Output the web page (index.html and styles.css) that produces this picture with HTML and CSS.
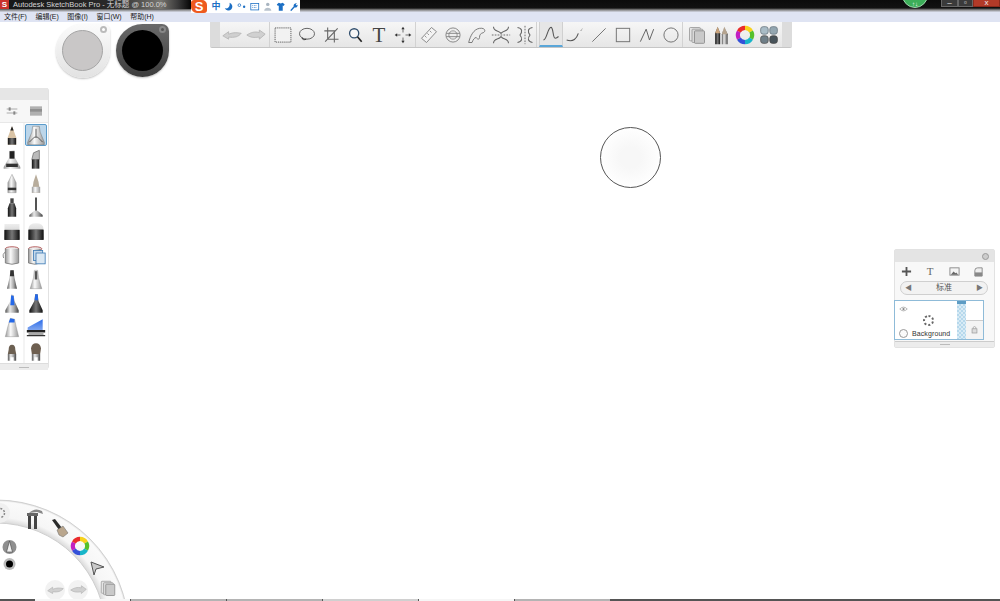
FILE: index.html
```html
<!DOCTYPE html>
<html lang="zh">
<head>
<meta charset="utf-8">
<title>Autodesk SketchBook Pro</title>
<link rel="stylesheet" href="styles.css">
</head>
<body>
<svg class="defs" width="0" height="0" aria-hidden="true">
  <defs>
    <linearGradient id="metal" x1="0" x2="1" y1="0" y2="0"><stop offset="0" stop-color="#555"/><stop offset=".35" stop-color="#e8e8e8"/><stop offset=".65" stop-color="#aaa"/><stop offset="1" stop-color="#444"/></linearGradient>
    <linearGradient id="light" x1="0" x2="1" y1="0" y2="0"><stop offset="0" stop-color="#999"/><stop offset=".4" stop-color="#fafafa"/><stop offset="1" stop-color="#999"/></linearGradient>
    <linearGradient id="dark" x1="0" x2="1" y1="0" y2="0"><stop offset="0" stop-color="#111"/><stop offset=".5" stop-color="#777"/><stop offset="1" stop-color="#111"/></linearGradient>
    <linearGradient id="block" x1="0" x2="0" y1="0" y2="1"><stop offset="0" stop-color="#eee"/><stop offset=".35" stop-color="#ddd"/><stop offset=".4" stop-color="#666"/><stop offset="1" stop-color="#222"/></linearGradient>
    <linearGradient id="tipblue" x1="0" x2="0" y1="0" y2="1"><stop offset="0" stop-color="#2a6bea"/><stop offset="1" stop-color="#7fa5ee"/></linearGradient>
    <symbol id="arrow-l" viewBox="0 0 24 14"><path d="M1 8 8 3v3c6-2.500 10-2 15-1-3 4-8 5.500-15 4.500V12z" fill="#d0d0d0" stroke="#b5b5b5"/></symbol>
    <symbol id="arrow-r" viewBox="0 0 24 14"><path d="M23 6 16 1v3C10 2.500 6 4 1 7c4 3 8 3.500 15 2.500V12z" fill="#d0d0d0" stroke="#b5b5b5"/></symbol>
    <symbol id="wheel" viewBox="0 0 24 24"><g fill="none" stroke-width="5"><path d="M12 3.500a8.500 8.500 0 0 1 7.400 4.300" stroke="#f7d21c"/><path d="M19.400 7.800a8.500 8.500 0 0 1 0 8.500" stroke="#56c02b"/><path d="M19.400 16.300A8.500 8.500 0 0 1 12 20.500" stroke="#17b5c9"/><path d="M12 20.500a8.500 8.500 0 0 1-7.400-4.200" stroke="#3450d8"/><path d="M4.600 16.300a8.500 8.500 0 0 1 0-8.500" stroke="#c21fc2"/><path d="M4.600 7.800A8.500 8.500 0 0 1 12 3.500" stroke="#ea2b2b"/></g></symbol>
    <symbol id="layers" viewBox="0 0 24 24"><rect x="3" y="3" width="13" height="16" rx="1" fill="#e4e4e4" stroke="#999"/><rect x="6" y="5" width="13" height="16" rx="1" fill="#d8d8d8" stroke="#999"/><rect x="9" y="7" width="12" height="15" rx="1" fill="#c9c9c9" stroke="#888"/></symbol>
  </defs>
</svg>

<header class="titlebar">
  <div class="app-title">
    <span class="app-logo">S</span>
    <span class="app-name">Autodesk SketchBook Pro - 无标题 @ 100.0%</span>
  </div>
  <div class="ime">
    <span class="ime-logo">S</span>
    <span class="ime-cn">中</span>
    <svg class="ime-icon" viewBox="0 0 12 12"><path d="M7 1a5 5 0 1 1-6 7c4 1 7-2 6-7z" fill="#1c6fc4"/></svg>
    <svg class="ime-icon" viewBox="0 0 12 12"><circle cx="3" cy="4" r="1.700" fill="none" stroke="#1c6fc4"/><circle cx="9" cy="6" r="1.500" fill="#1c6fc4"/></svg>
    <svg class="ime-icon" viewBox="0 0 12 12"><rect x="1" y="2" width="10" height="8" fill="none" stroke="#1c6fc4"/><path d="M3 4.500h6M3 7h6" stroke="#1c6fc4" stroke-dasharray="1 1"/></svg>
    <svg class="ime-icon" viewBox="0 0 12 12"><circle cx="6" cy="3" r="2.200" fill="#a8b4c0"/><path d="M1.500 11c0-5 9-5 9 0z" fill="#b8c2cc"/></svg>
    <svg class="ime-icon" viewBox="0 0 12 12"><path d="M3.500 1 1 3l1.500 2 1-.5V11h5V4.500l1 .5L11 3 8.500 1 6 2z" fill="#1c6fc4"/></svg>
    <svg class="ime-icon" viewBox="0 0 12 12"><path d="M1.500 10.500 6 5.500C5 3 7.500 1 10 1.500L8.500 3.300 10 4.500 11 3c.3 3-2 4.500-4 3.800l-4 4.500z" fill="#1c6fc4"/></svg>
  </div>
  <div class="update-badge">↑↓</div>
  <div class="win-buttons">
    <span class="win-btn min">–</span>
    <span class="win-btn max">▫</span>
    <span class="win-btn close">x</span>
  </div>
</header>

<nav class="menubar">
  <span class="menu-item">文件(F)</span>
  <span class="menu-item">编辑(E)</span>
  <span class="menu-item">图像(I)</span>
  <span class="menu-item">窗口(W)</span>
  <span class="menu-item">帮助(H)</span>
</nav>

<main class="canvas">
  <div class="puck puck-light"><span class="puck-core"></span><span class="puck-ring"></span></div>
  <div class="puck puck-dark"><span class="puck-core"></span><span class="puck-ring"></span></div>

  <div class="toolbar">
    <div class="grip"></div>
    <div class="tool-group g-edit">
      <svg class="tool" viewBox="0 0 24 24"><use href="#arrow-l" y="5" width="24" height="14"/></svg>
      <svg class="tool" viewBox="0 0 24 24"><use href="#arrow-r" y="5" width="24" height="14"/></svg>
    </div>
    <div class="tool-group g-select">
      <svg class="tool" viewBox="0 0 24 24"><rect x="2.500" y="3.500" width="19" height="17" fill="#f2f2f2" stroke="#444" stroke-dasharray="1.500 1"/></svg>
      <svg class="tool" viewBox="0 0 24 24"><ellipse cx="12" cy="10.500" rx="9" ry="6.500" fill="none" stroke="#666" stroke-width="1.200"/><path d="M6 15c0 3 3 3 5 2" fill="none" stroke="#333" stroke-width="1.200"/></svg>
      <svg class="tool" viewBox="0 0 24 24"><path d="M8 3v14h13M4 7h12v14M5 20 20 4" fill="none" stroke="#666" stroke-width="1.300"/></svg>
      <svg class="tool" viewBox="0 0 24 24"><circle cx="11" cy="10" r="5.500" fill="#f6f6f6" stroke="#33506e" stroke-width="1.600"/><path d="m15 14 5 6" stroke="#222" stroke-width="2"/></svg>
      <span class="tool t-glyph">T</span>
      <svg class="tool" viewBox="0 0 24 24"><path d="M12 4v5M12 15v5M4 12h5M15 12h5" stroke="#555"/><path d="m12 2 2 3h-4zM12 22l2-3h-4zM2 12l3-2v4zM22 12l-3-2v4z" fill="#333"/></svg>
    </div>
    <div class="tool-group g-guides">
      <svg class="tool" viewBox="0 0 24 24"><path d="m3 16 12-13 6 5-12 13z" fill="#f4f4f4" stroke="#777"/><path d="m7 13 2 2m1-5 2 2m1-5 2 2" stroke="#888"/></svg>
      <svg class="tool" viewBox="0 0 24 24"><circle cx="12" cy="12" r="8.500" fill="#eee" stroke="#777"/><ellipse cx="12" cy="12" rx="5" ry="5" fill="none" stroke="#888"/><path d="M4 10h16M4 14h16" stroke="#777"/></svg>
      <svg class="tool" viewBox="0 0 24 24"><path d="M2 21c2-8 6-16 13-17 6-1 8 3 5 5-4 1-5 3-5 6 0 3-3 2-4 0-2 0-4 3-5 6z" fill="#eee" stroke="#666"/></svg>
      <svg class="tool" viewBox="0 0 24 24"><path d="M1 12h22" stroke="#555" stroke-dasharray="2 1.500"/><path d="M3 2c0 6 6 4 9 8 3-4 9-2 9-8M3 22c0-6 6-4 9-8 3 4 9 2 9 8" fill="none" stroke="#666" stroke-width="1.300"/></svg>
      <svg class="tool" viewBox="0 0 24 24"><path d="M12 1v22" stroke="#555" stroke-dasharray="2 1.500"/><path d="M3 3c6 1 6 5 3 9 3 4 3 8-3 9M21 3c-6 1-6 5-3 9-3 4-3 8 3 9" fill="none" stroke="#666" stroke-width="1.300"/></svg>
    </div>
    <div class="tool-group g-draw">
      <span class="tool-on"><svg class="tool" viewBox="0 0 24 24"><path d="M3 19C7 19 8 4 12 4c3 0 2 13 5 13 2 0 3-1 4-2" fill="none" stroke="#555" stroke-width="1.300"/></svg></span>
      <svg class="tool" viewBox="0 0 24 24"><path d="M2 18c8 3 12-2 14-8" fill="none" stroke="#555" stroke-width="1.300"/><path d="M19 7l2-3" stroke="#555" stroke-dasharray="1 1"/></svg>
      <svg class="tool" viewBox="0 0 24 24"><path d="M4 20 20 4" stroke="#777" stroke-width="1.200"/></svg>
      <svg class="tool" viewBox="0 0 24 24"><rect x="4" y="4" width="16" height="16" fill="none" stroke="#777" stroke-width="1.200"/></svg>
      <svg class="tool" viewBox="0 0 24 24"><path d="M4 20 11 5l4 13 5-13" fill="none" stroke="#666" stroke-width="1.200"/></svg>
      <svg class="tool" viewBox="0 0 24 24"><circle cx="12" cy="12" r="8.500" fill="none" stroke="#777" stroke-width="1.200"/></svg>
    </div>
    <div class="tool-group g-end">
      <svg class="tool" viewBox="0 0 24 24"><use href="#layers"/></svg>
      <svg class="tool" viewBox="0 0 24 24"><path d="M5 10 8 2l3 8v13H5z" fill="url(#dark)"/><path d="M5 10h6l-3-8z" fill="#c9a27a"/><path d="m13 11 3-9 4 9v12h-7z" fill="url(#metal)"/><path d="m13 11 3-9 4 9z" fill="#b5a48f"/></svg>
      <svg class="tool" viewBox="0 0 24 24"><use href="#wheel"/></svg>
      <svg class="tool" viewBox="0 0 24 24"><rect x="2" y="2" width="9" height="9" rx="3" fill="#a9bcc6" stroke="#6c7a82"/><rect x="13" y="2" width="9" height="9" rx="3" fill="#93a6b0" stroke="#6c7a82"/><rect x="2" y="13" width="9" height="9" rx="3" fill="#6f7f88" stroke="#555"/><rect x="13" y="13" width="9" height="9" rx="3" fill="#47535a" stroke="#444"/></svg>
    </div>
    <div class="grip"></div>
  </div>

  <aside class="brush-palette">
    <div class="pal-head"></div>
    <div class="pal-tools">
      <svg class="pal-icon" viewBox="0 0 24 24"><path d="M4 9h16M4 15h16" stroke="#888"/><rect x="7" y="6.500" width="3" height="5" fill="#888"/><rect x="14" y="12.500" width="3" height="5" fill="#888"/></svg>
      <svg class="pal-icon" viewBox="0 0 24 24"><rect x="3" y="5" width="18" height="14" fill="#b0b0b0"/><rect x="3" y="9" width="18" height="4" fill="#8f8f8f"/></svg>
    </div>
    <div class="brush-grid">
      <svg class="brush" viewBox="0 0 24 24"><path d="m12 1 5 13v9H7v-9z" fill="#d9c3a5"/><path d="m12 1 2 5h-4z" fill="#222"/><rect x="7" y="15" width="10" height="8" fill="url(#dark)"/></svg>
      <span class="brush-on"><svg class="brush" viewBox="0 0 24 24"><path d="M8 1h8l1 7 5 12v3H2v-3l5-12z" fill="url(#light)" stroke="#666" stroke-width=".5"/><path d="M12 4v10M4 20l6-6h4l6 6" fill="none" stroke="#444"/></svg></span>
      <svg class="brush" viewBox="0 0 24 24"><path d="M9 1h6v8l7 12v2H2v-2L9 9z" fill="url(#light)"/><rect x="9" y="2" width="6" height="9" fill="#222"/><rect x="5" y="17" width="14" height="4" fill="#333"/></svg>
      <svg class="brush" viewBox="0 0 24 24"><path d="M7 12 9 4l7-3v11z" fill="#bbb" stroke="#777"/><rect x="7" y="12" width="9" height="11" fill="url(#dark)"/></svg>
      <svg class="brush" viewBox="0 0 24 24"><path d="m12 1 5 10v12H7V11z" fill="url(#light)" stroke="#888" stroke-width=".5"/><rect x="7" y="17" width="10" height="3" fill="#333"/></svg>
      <svg class="brush" viewBox="0 0 24 24"><path d="m12 1 3 9 2 13H7l2-13z" fill="#b8ad9c"/><rect x="7" y="16" width="10" height="7" fill="url(#light)"/></svg>
      <svg class="brush" viewBox="0 0 24 24"><rect x="10" y="1" width="4" height="6" fill="#444"/><path d="m9 7h6l2 6v10H7V13z" fill="url(#dark)"/></svg>
      <svg class="brush" viewBox="0 0 24 24"><rect x="11" y="0" width="2" height="16" fill="#333"/><path d="M10 16h4l6 5v2H4v-2z" fill="url(#metal)"/></svg>
      <svg class="brush" viewBox="0 0 24 24"><rect x="3" y="3" width="18" height="19" fill="url(#block)"/><rect x="3" y="10" width="18" height="12" fill="url(#dark)"/></svg>
      <svg class="brush" viewBox="0 0 24 24"><path d="M3 9q0-7 9-7t9 7v13H3z" fill="url(#block)"/><rect x="3" y="10" width="18" height="12" fill="url(#dark)"/></svg>
      <svg class="brush" viewBox="0 0 24 24"><ellipse cx="12" cy="4" rx="8" ry="2.500" fill="#eee" stroke="#a44"/><path d="M4 4v17q8 3 16 0V4" fill="url(#light)" stroke="#777"/><path d="M4 8q-4 2-2 7" fill="none" stroke="#777"/></svg>
      <svg class="brush" viewBox="0 0 24 24"><ellipse cx="11" cy="4" rx="8" ry="2.500" fill="#eee" stroke="#a44"/><path d="M3 4v17q8 3 14 0V4" fill="url(#light)" stroke="#777"/><rect x="9" y="6" width="11" height="12" fill="#c4d8ea" stroke="#3f7cb5"/><rect x="12" y="9" width="11" height="13" fill="#dbe8f3" stroke="#3f7cb5"/></svg>
      <svg class="brush" viewBox="0 0 24 24"><path d="M10 1h4l1 9 3 13H6l3-13z" fill="url(#metal)"/><path d="M10 1h4l.500 7h-5z" fill="#333"/></svg>
      <svg class="brush" viewBox="0 0 24 24"><path d="M10 1h4l1 9 4 13H5l4-13z" fill="url(#light)" stroke="#888" stroke-width=".5"/><path d="M10.500 2h3v10h-3z" fill="#555"/></svg>
      <svg class="brush" viewBox="0 0 24 24"><path d="m10 9 1-8 3 1 1 7 5 11v3H4v-3z" fill="url(#metal)"/><path d="m10 14 1-12 3 1 1 11z" fill="#2468e8"/></svg>
      <svg class="brush" viewBox="0 0 24 24"><path d="m10 9 1-8h3l1 8 5 11v3H4v-3z" fill="url(#dark)"/><path d="m10.500 8 .500-7h3l.500 7z" fill="#2468e8"/></svg>
      <svg class="brush" viewBox="0 0 24 24"><path d="M10 1l5 1 2 9 3 12H4l3-12z" fill="url(#light)" stroke="#888" stroke-width=".5"/><path d="m8 6 2-5 5 1v4z" fill="#2468e8"/></svg>
      <svg class="brush" viewBox="0 0 24 24"><path d="m2 12 18-10v13H2z" fill="url(#tipblue)"/><rect x="1" y="15" width="22" height="3" fill="#222"/><rect x="3" y="18" width="18" height="3" fill="#aaa"/><rect x="1" y="21" width="22" height="1.500" fill="#333"/></svg>
      <svg class="brush" viewBox="0 0 24 24"><path d="M8 10q0-6 4-6t4 6l1 5H7z" fill="#6c6052"/><path d="M7 15h10v8h-3v-4h-4v4H7z" fill="url(#metal)"/></svg>
      <svg class="brush" viewBox="0 0 24 24"><path d="M6 8q1-6 6-6t6 6l-1 7H7z" fill="#6e5f50"/><path d="M7 15h10v8h-3v-4h-4v4H7z" fill="url(#metal)"/></svg>
    </div>
    <div class="pal-foot"><span class="foot-mark"></span></div>
  </aside>

  <div class="cursor-ring"></div>

  <aside class="layer-panel">
    <div class="lp-head"><span class="lp-close"></span></div>
    <div class="lp-tools">
      <svg class="lp-icon" viewBox="0 0 12 12"><path d="M5 1h2v4h4v2H7v4H5V7H1V5h4z" fill="#555"/></svg>
      <span class="lp-icon lp-t">T</span>
      <svg class="lp-icon" viewBox="0 0 12 12"><rect x="1" y="2" width="10" height="8" fill="#f4f4f4" stroke="#888"/><path d="M2 9.500 5 6l2 2 1-1 2 2.500z" fill="#666"/></svg>
      <svg class="lp-icon" viewBox="0 0 12 12"><path d="M2 11V5q0-3 3-3h5v9z" fill="#eee" stroke="#888"/><rect x="2" y="7" width="8" height="4" fill="#888"/></svg>
    </div>
    <div class="lp-mode">
      <span class="lp-arrow">◀</span>
      <span class="lp-name">标准</span>
      <span class="lp-arrow">▶</span>
    </div>
    <div class="layer-row">
      <div class="layer-thumb">
        <svg class="layer-eye" viewBox="0 0 12 8"><path d="M1 4q5-5 10 0-5 5-10 0z" fill="#fff" stroke="#888" stroke-width=".8"/><circle cx="6" cy="4" r="1.500" fill="#888"/></svg>
        <span class="layer-busy"></span>
        <div class="layer-label"><span class="layer-radio"></span><span class="layer-name">Background</span></div>
      </div>
      <div class="layer-slider"></div>
      <div class="layer-side">
        <div class="layer-blank"></div>
        <div class="layer-lock"><svg class="lock-icon" viewBox="0 0 10 12"><path d="M3 5V3q2-2.500 4 0v2" fill="none" stroke="#999"/><rect x="1.500" y="5" width="7" height="6" fill="#ddd" stroke="#999"/></svg></div>
      </div>
    </div>
    <div class="lp-foot"><span class="foot-mark"></span></div>
  </aside>

  <svg class="radial" viewBox="0 0 135 106">
    <defs>
      <radialGradient id="band" gradientUnits="userSpaceOnUse" cx="-4" cy="138" r="133">
        <stop offset=".83" stop-color="#dcdcdc"/><stop offset=".87" stop-color="#f6f6f6"/><stop offset=".985" stop-color="#fafafa"/><stop offset="1" stop-color="#e0e0e0"/>
      </radialGradient>
    </defs>
    <circle cx="-4" cy="138" r="133" fill="url(#band)" stroke="#d0d0d0"/>
    <circle cx="-4" cy="138" r="110" fill="#fff" stroke="#cfcfcf"/>
    <circle cx="0" cy="18" r="10" fill="#f0f0f0"/>
    <circle cx="0" cy="18" r="4.500" fill="none" stroke="#888" stroke-width="1.500" stroke-dasharray="2 1.500"/>
    <path d="M28 21h3v13h-3zM34 21h3v13h-3z" fill="#444"/>
    <path d="M27 18h11v3H27z" fill="#666"/>
    <path d="M29 18q6-6 13-2l1 3-6-2z" fill="#888"/>
    <path d="m52 25 3-1 7 9-3 2z" fill="#2c2c2c"/>
    <path d="m57 35 6-4 5 7-5 4-4-2z" fill="#b9a68d" stroke="#666" stroke-width=".5"/>
    <svg x="70" y="41" width="20" height="20" viewBox="0 0 24 24"><use href="#wheel"/></svg>
    <path d="m91 67 13 5-8 2-2 6z" fill="#c9c9c9" stroke="#555"/>
    <svg x="99" y="84" width="18" height="18" viewBox="0 0 24 24"><use href="#layers"/></svg>
    <circle cx="55" cy="95" r="10" fill="#f2f2f2"/>
    <circle cx="78" cy="95" r="10" fill="#f2f2f2"/>
    <svg x="47" y="90" width="17" height="10" viewBox="0 0 24 14"><use href="#arrow-l"/></svg>
    <svg x="70" y="90" width="17" height="10" viewBox="0 0 24 14"><use href="#arrow-r"/></svg>
    <circle cx="9.500" cy="52" r="7" fill="#8f8f8f"/>
    <path d="m9.500 46 3 11h-6z" fill="#f0f0f0" stroke="#444" stroke-width=".6"/>
    <circle cx="9.500" cy="69" r="6" fill="#bbb"/>
    <circle cx="9.500" cy="69" r="3.500" fill="#000"/>
  </svg>
</main>

<footer class="taskbar">
  <span class="task-start"></span>
  <span class="task task-active"></span>
  <span class="task"></span>
  <span class="task"></span>
  <span class="task task-mid"></span>
  <span class="task task-active"></span>
  <span class="task"></span>
</footer>
</body>
</html>
```

FILE: styles.css
```css
* { box-sizing: border-box; }
html, body { margin: 0; padding: 0; }
body {
  width: 1000px;
  height: 601px;
  overflow: hidden;
  display: flex;
  flex-direction: column;
  background: #fff;
  font-family: "Liberation Sans", "Noto Sans CJK SC", sans-serif;
}
.defs { position: absolute; }

.titlebar {
  height: 12px;
  flex: none;
  display: flex;
  position: relative;
  background: linear-gradient(#0b0b0b 0, #111 8px, #8a8a8a 10px, #d5d9e6 12px);
}
.app-title {
  width: 191px;
  height: 9px;
  flex: none;
  display: flex;
  align-items: center;
  background: linear-gradient(90deg, #161616 0, #2a2a2a 60%, #77756f 84%, #3a3a3a 93%, #050505 100%);
}
.app-logo {
  width: 9px;
  height: 9px;
  margin-right: 4px;
  flex: none;
  background: #c9302a;
  color: #fff;
  font: bold 8px/9px "Liberation Sans", sans-serif;
  text-align: center;
}
.app-name {
  font-size: 7.500px;
  line-height: 9px;
  color: #d4d4d4;
  white-space: nowrap;
}
.ime {
  width: 109px;
  height: 12.500px;
  flex: none;
  display: flex;
  align-items: center;
  gap: 3.500px;
  background: #fff;
}
.ime-logo {
  width: 16px;
  height: 13px;
  flex: none;
  margin-right: 1px;
  background: #ee5a1e;
  border-radius: 3px 5px 3px 6px;
  color: #fff;
  font: bold 13px/13px "Liberation Sans", sans-serif;
  text-align: center;
}
.ime-cn {
  width: 9px;
  flex: none;
  font-size: 9px;
  line-height: 12px;
  font-weight: bold;
  color: #1c6fc4;
}
.ime-icon { width: 9.500px; height: 9.500px; flex: none; }
.update-badge {
  position: absolute;
  left: 902px;
  top: -18px;
  width: 26px;
  height: 26px;
  border-radius: 50%;
  background: #3cae59;
  border: 1px solid #9fd8ae;
  color: #fff;
  font-size: 6px;
  line-height: 42px;
  text-align: center;
}
.win-buttons {
  position: absolute;
  right: 0;
  top: 0;
  display: flex;
  height: 7px;
}
.win-btn {
  height: 7px;
  font-size: 8px;
  line-height: 6px;
  text-align: center;
  color: #eee;
  border: 1px solid #666;
  border-top: 0;
}
.min { width: 17px; background: #3a3a3a; }
.max { width: 15px; background: #3a3a3a; }
.close { width: 27px; background: #b23a28; border-color: #8a2a1c; }

.menubar {
  height: 10px;
  flex: none;
  display: flex;
  align-items: center;
  gap: 8.500px;
  padding-left: 4px;
  background: #dfe4f3;
}
.menu-item {
  font-size: 7px;
  line-height: 10px;
  color: #222;
  white-space: nowrap;
}

.canvas {
  flex: 1;
  position: relative;
  background: #fff;
  overflow: hidden;
}

.puck {
  position: absolute;
  top: 2px;
  width: 54px;
  height: 54px;
  border-radius: 50% 7px 50% 50%;
  box-shadow: 0 1px 2px rgba(0,0,0,.25);
}
.puck-light { left: 56px; background: linear-gradient(#fbfbfb, #e2e2e2); }
.puck-dark { left: 116px; width: 53px; height: 53px; background: linear-gradient(#6a6a6a, #3c3c3c); }
.puck-core {
  position: absolute;
  left: 6px;
  top: 6px;
  width: 41px;
  height: 41px;
  border-radius: 50%;
}
.puck-light .puck-core { background: #c9c7c7; border: 1px solid #a5a5a5; }
.puck-dark .puck-core { background: #000; }
.puck-ring {
  position: absolute;
  right: 3px;
  top: 2px;
  width: 7px;
  height: 7px;
  border-radius: 50%;
}
.puck-light .puck-ring { background: #fff; border: 2px solid #bbb; }
.puck-dark .puck-ring { background: #555; border: 2px solid #888; }

.toolbar {
  position: absolute;
  left: 210px;
  top: 0;
  width: 582px;
  height: 26px;
  display: flex;
  background: linear-gradient(#f6f6f6, #e6e6e6);
  border-bottom: 1px solid #c6c6c6;
  border-radius: 0 0 2px 2px;
}
.grip { width: 10px; flex: none; background: #dcdcdc; }
.tool-group {
  display: flex;
  align-items: center;
  flex: none;
  border-right: 1px solid #d2d2d2;
}
.g-edit { width: 50px; }
.g-select { width: 146px; padding-left: 1px; }
.g-guides { width: 121px; padding-left: 1px; }
.g-draw { width: 146px; padding-left: 2px; }
.g-end { width: 99px; padding-left: 2px; border-right: 0; }
.tool { width: 20px; height: 20px; margin: 0 2px; flex: none; display: block; }
.t-glyph {
  font: 21px/20px "Liberation Serif", serif;
  color: #444;
  text-align: center;
}
.tool-on {
  width: 24px;
  height: 25px;
  flex: none;
  display: flex;
  align-items: center;
  justify-content: center;
  background: #e6e6e6;
  border-left: 1px solid #d0d0d0;
  border-right: 1px solid #d0d0d0;
  border-bottom: 2px solid #5aa6d8;
}

.brush-palette {
  position: absolute;
  left: 0;
  top: 66px;
  width: 49px;
  height: 281px;
  display: flex;
  flex-direction: column;
  background: #f7f7f7;
  border-right: 1px solid #e2e2e2;
  border-bottom: 1px solid #d4d4d4;
  border-radius: 0 3px 3px 0;
}
.pal-head { height: 12px; flex: none; background: #e6e6e6; }
.pal-tools {
  height: 23px;
  flex: none;
  display: grid;
  grid-template-columns: 24px 24px;
  align-items: center;
  justify-items: center;
  border-bottom: 1px solid #e8e8e8;
}
.pal-icon { width: 16px; height: 16px; }
.brush-grid {
  flex: 1;
  display: grid;
  grid-template-columns: 24px 24px;
  grid-auto-rows: 24px;
  align-items: center;
  justify-items: center;
  background: linear-gradient(90deg, #fff 23px, #f4f4f4 23px, #f4f4f4 25px, #fff 25px);
}
.brush { width: 20px; height: 21px; display: block; }
.brush-on {
  width: 22px;
  height: 22px;
  display: flex;
  align-items: center;
  justify-content: center;
  background: #bcd6ea;
  border: 1px solid #5a9bcb;
  border-radius: 2px;
}
.pal-foot {
  height: 7px;
  flex: none;
  display: flex;
  justify-content: center;
  align-items: center;
  background: #ececec;
  border-top: 1px solid #ddd;
}
.foot-mark { width: 10px; height: 1px; background: #bbb; }

.cursor-ring {
  position: absolute;
  left: 600px;
  top: 105px;
  width: 61px;
  height: 61px;
  border-radius: 50%;
  border: 1px solid #555;
  background: radial-gradient(#f7f7f7 25%, #fff 75%);
}

.layer-panel {
  position: absolute;
  left: 894px;
  top: 227px;
  width: 101px;
  height: 99px;
  display: flex;
  flex-direction: column;
  background: #f8f8f8;
  border: 1px solid #e2e2e2;
  border-radius: 2px;
}
.lp-head {
  height: 12px;
  flex: none;
  display: flex;
  justify-content: flex-end;
  align-items: center;
  padding-right: 5px;
  background: #e4e4e4;
}
.lp-close {
  width: 7px;
  height: 7px;
  border-radius: 50%;
  background: #ccc;
  border: 1px solid #999;
}
.lp-tools {
  height: 19px;
  flex: none;
  margin-left: -1px;
  display: grid;
  grid-template-columns: repeat(4, 24px);
  align-items: center;
  justify-items: center;
}
.lp-icon { width: 11px; height: 11px; display: block; }
.lp-t {
  font: 11px/11px "Liberation Serif", serif;
  color: #666;
  text-align: center;
}
.lp-mode {
  width: 88px;
  height: 14px;
  margin-left: 5px;
  flex: none;
  display: flex;
  justify-content: space-between;
  align-items: center;
  padding: 0 4px;
  background: #f2f2f2;
  border: 1px solid #cfcfcf;
  border-radius: 7px;
}
.lp-arrow { font-size: 7px; line-height: 12px; color: #777; }
.lp-name { font-size: 8px; line-height: 12px; color: #555; }
.layer-row {
  width: 90px;
  height: 40px;
  margin: 5px 0 0 -1px;
  flex: none;
  display: flex;
  background: #fff;
  border: 1px solid #8fbbd8;
}
.layer-thumb { flex: 1; position: relative; }
.layer-eye {
  position: absolute;
  left: 4px;
  top: 5px;
  width: 9px;
  height: 6px;
}
.layer-busy {
  position: absolute;
  left: 28px;
  top: 14px;
  width: 11px;
  height: 11px;
  border-radius: 50%;
  border: 2px dotted #666;
}
.layer-label {
  position: absolute;
  left: 4px;
  bottom: 1px;
  display: flex;
  align-items: center;
  gap: 4px;
}
.layer-radio {
  width: 9px;
  height: 9px;
  border-radius: 50%;
  border: 1px solid #999;
  background: #fafafa;
}
.layer-name { font-size: 7px; line-height: 9px; letter-spacing: .1px; color: #333; }
.layer-slider {
  width: 9px;
  flex: none;
  background: repeating-conic-gradient(#b6d8ec 0 25%, #d8ebf5 0 50%) 0 0 / 4px 4px;
  border-top: 3px solid #5d9cc4;
}
.layer-side {
  width: 17px;
  flex: none;
  display: flex;
  flex-direction: column;
}
.layer-blank { flex: 1; border-bottom: 1px solid #ccc; }
.layer-lock {
  flex: 1;
  display: flex;
  align-items: center;
  justify-content: center;
  background: #f4f4f4;
}
.lock-icon { width: 7px; height: 9px; }
.lp-foot {
  flex: 1;
  margin-top: 1px;
  display: flex;
  justify-content: center;
  align-items: center;
  background: #ececec;
  border-top: 1px solid #ccc;
}

.radial {
  position: absolute;
  left: 0;
  bottom: -2px;
  width: 135px;
  height: 106px;
}

.taskbar {
  height: 2px;
  flex: none;
  position: relative;
  display: flex;
  gap: 1px;
  background: #555;
}
.task-start { width: 34px; flex: none; }
.task { width: 95px; flex: none; background: #b4b4b4; }
.task-mid { background: #d0d0d0; }
.task-active { background: #f6f6f6; }
```
